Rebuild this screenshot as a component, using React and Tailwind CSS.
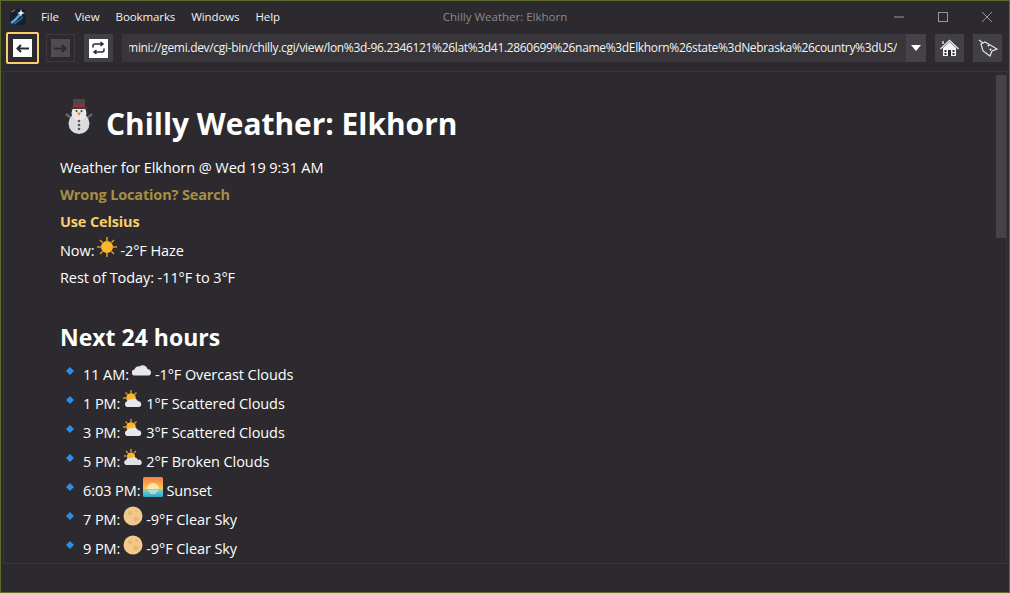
const menus = ["File", "View", "Bookmarks", "Windows", "Help"];

const url =
  "gemini://gemi.dev/cgi-bin/chilly.cgi/view/lon%3d-96.2346121%26lat%3d41.2860699%26name%3dElkhorn%26state%3dNebraska%26country%3dUS/";

function Snowman() {
  return (
    <svg width="28" height="36" viewBox="0 0 28 36">
      <path d="M6 20 L1 16 M22 20 L27 16" stroke="#66646a" strokeWidth="2.5" />
      <circle cx="14" cy="25.5" r="10.5" fill="#dcdcde" />
      <circle cx="14" cy="15" r="7.5" fill="#e8e8ea" />
      <rect x="8" y="1" width="12" height="9" fill="#4a484c" />
      <rect x="6" y="9" width="16" height="2" fill="#3d3b3f" />
      <rect x="8" y="6.5" width="12" height="2.5" fill="#9c2b2b" />
      <path d="M12 14.5 L16 14.5 L14 18 Z" fill="#f08a24" />
      <circle cx="11.5" cy="13" r="1" fill="#333" />
      <circle cx="16.5" cy="13" r="1" fill="#333" />
      <circle cx="14" cy="23" r="1.3" fill="#555" />
      <circle cx="14" cy="27" r="1.3" fill="#555" />
      <circle cx="14" cy="31" r="1.3" fill="#555" />
    </svg>
  );
}

function Sun() {
  return (
    <svg width="20" height="20" viewBox="0 0 20 20">
      <g stroke="#d9962a" strokeWidth="1.6">
        <path d="M10 0 V4 M10 16 V20 M0 10 H4 M16 10 H20 M3 3 L5.5 5.5 M14.5 14.5 L17 17 M17 3 L14.5 5.5 M5.5 14.5 L3 17" />
      </g>
      <circle cx="10" cy="10" r="6" fill="#fbb62f" />
    </svg>
  );
}

function Cloud() {
  return (
    <svg width="20" height="20" viewBox="0 0 20 20">
      <path
        d="M3 14.5 a3 3 0 0 1 -0.5 -6 a4 4 0 0 1 5 -3 a5 5 0 0 1 8 2.5 a3.4 3.4 0 0 1 1.5 6.5 Z"
        fill="#e6e8ec"
      />
    </svg>
  );
}

function SunCloud() {
  return (
    <svg width="20" height="20" viewBox="0 0 20 20">
      <g stroke="#d9962a" strokeWidth="1.4">
        <path d="M8 0 V3 M0 8 H3 M2.5 2.5 L4.5 4.5 M13.5 2.5 L11.5 4.5 M2.5 13.5 L4.5 11.5" />
      </g>
      <circle cx="8" cy="8" r="4.8" fill="#fbb62f" />
      <path
        d="M4 17 a2.8 2.8 0 0 1 0 -5.4 a3.5 3.5 0 0 1 4.5 -2 a4 4 0 0 1 6.5 1.7 a2.9 2.9 0 0 1 1 5.7 Z"
        fill="#e6e8ec"
      />
    </svg>
  );
}

function SunLowCloud() {
  return (
    <svg width="20" height="20" viewBox="0 0 20 20">
      <g stroke="#d9962a" strokeWidth="1.4">
        <path d="M8 1 V4 M1 8 H3.5 M3 3 L5 5 M13 3 L11 5" />
      </g>
      <circle cx="8" cy="8.5" r="4" fill="#fbb62f" />
      <path
        d="M3 17 a2.6 2.6 0 0 1 0 -5 a3.6 3.6 0 0 1 5 -1.6 a4.2 4.2 0 0 1 7 1.5 a2.6 2.6 0 0 1 2 5.1 Z"
        fill="#dfe2e8"
      />
    </svg>
  );
}

function Sunset() {
  return (
    <svg width="20" height="20" viewBox="0 0 20 20">
      <defs>
        <linearGradient id="sky" x1="0" y1="0" x2="0" y2="1">
          <stop offset="0" stopColor="#f5803e" />
          <stop offset="0.6" stopColor="#fbc75a" />
          <stop offset="0.62" stopColor="#7fd3d0" />
          <stop offset="1" stopColor="#2fa7c4" />
        </linearGradient>
      </defs>
      <rect width="20" height="20" rx="1.5" fill="url(#sky)" />
      <path d="M4 12 a6 6 0 0 1 12 0 Z" fill="#fde9a8" />
      <path d="M5 14 H15 M7 16 H13" stroke="#f6f6e4" strokeWidth="1" />
    </svg>
  );
}

function Moon() {
  return (
    <svg width="20" height="20" viewBox="0 0 20 20">
      <circle cx="10" cy="10" r="9.5" fill="#f3c98b" />
      <circle cx="7" cy="7" r="2.2" fill="#e5b878" />
      <circle cx="13" cy="13" r="2.6" fill="#e5b878" />
      <circle cx="13.5" cy="5.5" r="1.3" fill="#e5b878" />
    </svg>
  );
}

const hours = [
  { time: "11 AM:", icon: <Cloud />, text: "-1°F Overcast Clouds" },
  { time: "1 PM:", icon: <SunCloud />, text: "1°F Scattered Clouds" },
  { time: "3 PM:", icon: <SunCloud />, text: "3°F Scattered Clouds" },
  { time: "5 PM:", icon: <SunLowCloud />, text: "2°F Broken Clouds" },
  { time: "6:03 PM:", icon: <Sunset />, text: "Sunset" },
  { time: "7 PM:", icon: <Moon />, text: "-9°F Clear Sky" },
  { time: "9 PM:", icon: <Moon />, text: "-9°F Clear Sky" },
];

function HourRow({ time, icon, text }) {
  return (
    <div className="flex h-[29px] items-center">
      <svg width="8" height="8" viewBox="0 0 8 8" className="mb-2 ml-[6px] mr-[9px]">
        <path d="M4 0 L8 4 L4 8 L0 4 Z" fill="#2a8fe8" />
      </svg>
      <span>{time}</span>
      <span className="mx-[3px] mb-[8px]">{icon}</span>
      <span>{text}</span>
    </div>
  );
}

export default function App() {
  return (
    <div
      className="flex h-[593px] w-[1010px] flex-col overflow-hidden border border-[#5c6b2a] bg-[#2c2a2e] text-white"
      style={{ fontFamily: '"Open Sans", sans-serif' }}
    >
      {/* title bar */}
      <div className="relative flex h-[31px] shrink-0 items-center">
        <svg width="18" height="18" viewBox="0 0 18 18" className="ml-[8px] mr-[14px]">
          <rect x="1" y="1" width="16" height="16" rx="4" fill="#14202f" />
          <path d="M2 15 Q7 12 12 5" stroke="#5aa9dc" strokeWidth="2.5" fill="none" />
          <path d="M5 16 Q10 13 14 9" stroke="#2f6f9c" strokeWidth="1.5" fill="none" />
          <path d="M12 1 L13 4 L16 5 L13 6 L12 9 L11 6 L8 5 L11 4 Z" fill="#e8f4fc" />
          <path d="M2 4 L6 2" stroke="#8a5a3c" strokeWidth="1.5" />
        </svg>
        <div className="flex gap-4 text-[11.5px] tracking-[-0.1px] text-[#f2f2f2]">
          {menus.map((m) => (
            <span key={m}>{m}</span>
          ))}
        </div>
        <div className="absolute inset-x-0 text-center text-[11.5px] text-[#8b898d]">
          Chilly Weather: Elkhorn
        </div>
        <div className="ml-auto flex items-center text-[#9a989c]">
          <svg width="44" height="12" viewBox="0 0 44 12">
            <path d="M17 6 H27" stroke="currentColor" />
          </svg>
          <svg width="44" height="12" viewBox="0 0 44 12">
            <rect x="17.5" y="1.5" width="9" height="9" fill="none" stroke="currentColor" />
          </svg>
          <svg width="44" height="12" viewBox="0 0 44 12">
            <path d="M17 1 L27 11 M27 1 L17 11" stroke="currentColor" />
          </svg>
        </div>
      </div>

      {/* toolbar */}
      <div className="flex h-[40px] shrink-0 items-center border-b border-[#38363a] pb-[7px]">
        <button className="ml-[5px] flex h-[32px] w-[33px] items-center justify-center rounded-[2px] border-2 border-[#f8cf6c]">
          <span className="flex h-[18px] w-[19px] items-center justify-center bg-white">
            <svg width="13" height="9" viewBox="0 0 13 9">
              <path d="M13 4.5 H2 M5 1 L1.5 4.5 L5 8" stroke="#2c2a2e" strokeWidth="2" fill="none" />
            </svg>
          </span>
        </button>
        <button className="ml-[7px] flex h-[28px] w-[29px] items-center justify-center border border-[#3c3a3e]">
          <span className="flex h-[18px] w-[19px] items-center justify-center bg-[#4e4c50]">
            <svg width="13" height="9" viewBox="0 0 13 9">
              <path d="M0 4.5 H11 M8 1 L11.5 4.5 L8 8" stroke="#2c2a2e" strokeWidth="2" fill="none" />
            </svg>
          </span>
        </button>
        <button className="ml-[9px] flex h-[28px] w-[29px] items-center justify-center bg-[#424044]">
          <span className="flex h-[19px] w-[19px] items-center justify-center bg-white">
            <svg width="15" height="14" viewBox="0 0 15 14" fill="none" stroke="#2c2a2e" strokeWidth="1.5">
              <path d="M2 6.5 V5 Q2 3 4 3 H12 M9.5 1 L12 3 L9.5 5" />
              <path d="M13 7.5 V9 Q13 11 11 11 H3 M5.5 9 L3 11 L5.5 13" />
            </svg>
          </span>
        </button>
        <div className="ml-[9px] flex h-[28px] w-[784px] items-center bg-[#38363a] pr-[9px] pl-[7px]">
          <div className="flex min-w-0 flex-1 justify-end overflow-hidden text-[12px] tracking-[-0.33px] whitespace-nowrap text-[#f4f4f4]">
            {url}
          </div>
        </div>
        <div className="flex h-[28px] w-[20px] items-center justify-center bg-[#454347]">
          <svg width="10" height="6" viewBox="0 0 10 6">
            <path d="M0 0 H10 L5 6 Z" fill="#fff" />
          </svg>
        </div>
        <button className="ml-[9px] flex h-[28px] w-[29px] items-center justify-center bg-[#424044]">
          <svg width="19" height="19" viewBox="0 0 19 19" fill="none">
            <path d="M3 9 L9.5 3 L16 9 V17 H3 Z" fill="#f4f4f4" />
            <path d="M0.5 10 L9.5 1.5 L18.5 10 M3 5 V2" stroke="#e4e4e6" strokeWidth="1.4" />
            <rect x="8" y="11" width="3" height="6" fill="#2c2a2e" />
            <rect x="4.5" y="11" width="2" height="2" fill="#2c2a2e" />
            <rect x="12.5" y="11" width="2" height="2" fill="#2c2a2e" />
            <rect x="4.5" y="14" width="2" height="2" fill="#2c2a2e" />
            <rect x="12.5" y="14" width="2" height="2" fill="#2c2a2e" />
          </svg>
        </button>
        <button className="ml-[9px] flex h-[28px] w-[29px] items-center justify-center bg-[#424044]">
          <svg width="20" height="18" viewBox="0 0 20 18" fill="none" stroke="#e4e4e6" strokeWidth="1.2">
            <path d="M3 5 L7 3 L19 10 L14 12 L12 17 L5 12 Z" />
            <path d="M1 1 L5 4" />
            <path d="M10 6 L11 7 M12 10 L13 11" stroke="#fff" strokeWidth="2" />
          </svg>
        </button>
      </div>

      {/* page */}
      <div className="relative mx-[2px] min-h-0 flex-1 border-x border-b border-[#38363a]">
        <div className="h-full overflow-hidden pl-[56px] text-[14.5px] tracking-[-0.08px]">
          <h1 className="mt-[28px] flex h-[48px] items-center text-[29.9px] leading-none font-bold tracking-normal">
            <span className="mr-[13px] mb-[17px] ml-[5px]">
              <Snowman />
            </span>
            Chilly Weather: Elkhorn
          </h1>
          <p className="mt-[6px] flex h-[27px] items-center">Weather for Elkhorn @ Wed 19 9:31 AM</p>
          <p className="flex h-[27px] items-center font-bold tracking-[-0.15px] text-[#a68e45]">
            Wrong Location? Search
          </p>
          <p className="flex h-[27px] items-center font-bold tracking-[-0.15px] text-[#f8cf6c]">Use Celsius</p>
          <p className="flex h-[29px] items-center pt-[2px]">
            Now:
            <span className="mx-[3px] mb-[8px]">
              <Sun />
            </span>
            -2°F Haze
          </p>
          <p className="flex h-[27px] items-center">Rest of Today: -11°F to 3°F</p>
          <h2 className="mt-[29px] flex h-[34px] items-center text-[23px] font-bold tracking-normal">
            Next 24 hours
          </h2>
          <div className="mt-[6px]">
            {hours.map((h, i) => (
              <HourRow key={i} {...h} />
            ))}
          </div>
        </div>
        {/* scrollbar */}
        <div className="absolute top-[3px] right-0 h-[163px] w-[10px] bg-[#454347]" />
      </div>

      {/* status bar */}
      <div className="h-[28px] shrink-0" />
    </div>
  );
}
